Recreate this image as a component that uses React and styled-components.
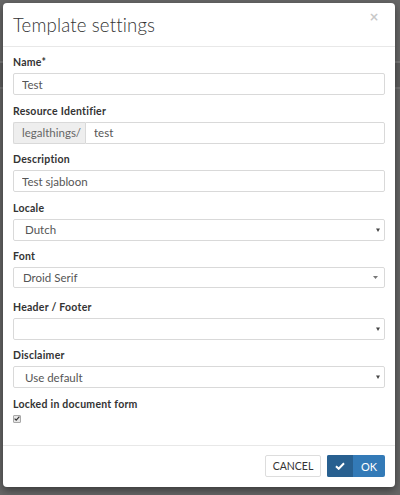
import React from 'react';
import styled, { createGlobalStyle } from 'styled-components';

const GlobalStyle = createGlobalStyle`
  html, body {
    margin: 0;
    padding: 0;
  }
  body {
    background: #666666;
    font-family: Lato, "Open Sans", sans-serif;
    color: #333333;
  }
  * {
    box-sizing: border-box;
  }
`;

const fields = [
  { label: 'Locale', value: 'Dutch', indent: 11, caret: 'large' },
  { label: 'Font', value: 'Droid Serif', indent: 9, caret: 'small', extra: 3 },
  { label: 'Header / Footer', value: '', indent: 9, caret: 'large' },
  { label: 'Disclaimer', value: 'Use default', indent: 11, caret: 'large' },
];

export default () => {
  return (
    <>
      <GlobalStyle />
      <Backdrop>
        <Dialog>
          <Header>
            <Title>Template settings</Title>
            <CloseButton aria-label="Close">×</CloseButton>
          </Header>

          <Body>
            <Group>
              <Label>Name*</Label>
              <TextInput defaultValue="Test" />
            </Group>

            <Group>
              <Label>Resource Identifier</Label>
              <InputGroup>
                <Addon>legalthings/</Addon>
                <TextInput defaultValue="test" $joined />
              </InputGroup>
            </Group>

            <Group>
              <Label>Description</Label>
              <TextInput defaultValue="Test sjabloon" />
            </Group>

            {fields.map((f) => {
              const small = f.caret === 'small';
              return (
                <Group key={f.label} $extra={f.extra}>
                  <Label>{f.label}</Label>
                  <SelectBox $small={small}>
                    <SelectValue $indent={f.indent}>{f.value}</SelectValue>
                    <Caret $small={small}>
                      {small ? (
                        <svg width="5" height="3" viewBox="0 0 5 3">
                          <path d="M0 0H5L2.5 3Z" fill="#777" />
                        </svg>
                      ) : (
                        <svg width="4" height="4" viewBox="0 0 4 4">
                          <path d="M0 0.5H4L2 4Z" fill="#444" />
                        </svg>
                      )}
                    </Caret>
                  </SelectBox>
                </Group>
              );
            })}

            <Group>
              <Label>Locked in document form</Label>
              <CheckBox>
                <svg width="6" height="5" viewBox="0 0 6 5">
                  <path d="M0.6 2.6L2.2 4.1L5.4 0.7" stroke="#333" strokeWidth="1.2" fill="none" />
                </svg>
              </CheckBox>
            </Group>
          </Body>

          <Footer>
            <CancelButton>CANCEL</CancelButton>
            <OkButton>
              <OkIcon>
                <svg width="10" height="8" viewBox="0 0 10 8">
                  <path d="M1 4.2L3.7 6.8L9 1.3" stroke="#fff" strokeWidth="2" fill="none" />
                </svg>
              </OkIcon>
              <OkLabel>OK</OkLabel>
            </OkButton>
          </Footer>
        </Dialog>
      </Backdrop>
    </>
  );
};

const Backdrop = styled.div`
  height: 495px;
  padding: 3px 5px 0 3px;
  overflow: hidden;
  background:
    linear-gradient(
      to bottom,
      #676767 0,
      #676767 61px,
      #7a7a7a 61px,
      #7a7a7a 63px,
      #5e5e5e 63px,
      #5e5e5e 87px,
      #747474 87px,
      #747474 89px,
      #666666 89px
    );
`;

const Dialog = styled.div`
  width: 392px;
  height: 484px;
  background: #ffffff;
  border-radius: 4px;
  box-shadow: 0 3px 9px rgba(0, 0, 0, 0.45);
  display: flex;
  flex-direction: column;
`;

const Header = styled.div`
  height: 44px;
  flex-shrink: 0;
  display: flex;
  justify-content: space-between;
  align-items: flex-start;
  padding: 0 10px 0 10px;
  border-bottom: 1px solid #e8e8e8;
`;

const Title = styled.h4`
  margin: 10px 0 0;
  font-size: 18.6px;
  line-height: 24px;
  font-weight: 300;
  letter-spacing: 0.15px;
  color: #333333;
`;

const CloseButton = styled.button`
  margin: 7px 6px 0 0;
  padding: 0;
  border: none;
  background: none;
  font-family: "DejaVu Sans", sans-serif;
  font-size: 12px;
  line-height: 14px;
  font-weight: bold;
  color: #c8c8c8;
`;

const Body = styled.div`
  flex: 1;
  padding: 9px 10px 0;
`;

const Group = styled.div`
  margin-bottom: ${(p) => 9.5 + (p.$extra || 0)}px;
`;

const Label = styled.label`
  display: block;
  font-size: 10.5px;
  line-height: 13px;
  font-weight: 700;
  letter-spacing: 0.25px;
  color: #333333;
  margin-bottom: 4px;
`;

const TextInput = styled.input`
  display: block;
  width: 100%;
  height: 22px;
  padding: 0 8px;
  border: 1px solid #d9d9d9;
  border-radius: ${(p) => (p.$joined ? '0 2px 2px 0' : '2px')};
  font-family: inherit;
  font-size: 11.5px;
  color: #555555;
  background: #ffffff;
  outline: none;
`;

const InputGroup = styled.div`
  display: flex;
`;

const Addon = styled.span`
  flex: 0 0 72px;
  height: 22px;
  display: flex;
  align-items: center;
  padding-left: 8px;
  background: #eeeeee;
  border: 1px solid #d9d9d9;
  border-right: none;
  border-radius: 2px 0 0 2px;
  font-size: 11.5px;
  color: #666666;
`;

const SelectBox = styled.div`
  height: ${(p) => (p.$small ? 21 : 22)}px;
  display: flex;
  align-items: center;
  justify-content: space-between;
  border: 1px solid #d9d9d9;
  border-radius: 2px;
  background: #ffffff;
`;

const SelectValue = styled.span`
  padding-left: ${(p) => p.$indent}px;
  font-size: 11.5px;
  color: #555555;
`;

const Caret = styled.span`
  display: flex;
  margin-right: ${(p) => (p.$small ? 6 : 4)}px;
`;

const CheckBox = styled.span`
  display: flex;
  align-items: center;
  justify-content: center;
  width: 8px;
  height: 8px;
  border: 1px solid #a8a8a8;
  border-radius: 1px;
  background: #e6e6e6;
`;

const Footer = styled.div`
  flex-shrink: 0;
  height: 42px;
  display: flex;
  justify-content: flex-end;
  align-items: flex-start;
  gap: 6px;
  padding: 9px 10px 0;
  border-top: 1px solid #e8e8e8;
`;

const CancelButton = styled.button`
  width: 56px;
  height: 22px;
  padding: 0;
  border: 1px solid #dddddd;
  border-radius: 2px;
  background: #ffffff;
  font-family: inherit;
  font-size: 10.5px;
  font-weight: 400;
  color: #333333;
`;

const OkButton = styled.button`
  width: 58px;
  height: 22px;
  padding: 0;
  display: flex;
  border: none;
  border-radius: 2px;
  overflow: hidden;
  background: #337ab7;
  font-family: inherit;
  font-size: 11px;
  color: #ffffff;
`;

const OkIcon = styled.span`
  flex: 0 0 26px;
  display: flex;
  align-items: center;
  justify-content: center;
  background: #286090;
`;

const OkLabel = styled.span`
  flex: 1;
  display: flex;
  align-items: center;
  justify-content: center;
`;
